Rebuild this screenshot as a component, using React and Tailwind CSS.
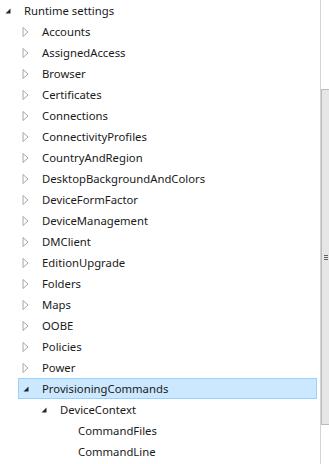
import React from 'react';

const rows = [
  { label: 'Runtime settings', level: 0, state: 'open' },
  { label: 'Accounts', level: 1, state: 'closed' },
  { label: 'AssignedAccess', level: 1, state: 'closed' },
  { label: 'Browser', level: 1, state: 'closed' },
  { label: 'Certificates', level: 1, state: 'closed' },
  { label: 'Connections', level: 1, state: 'closed' },
  { label: 'ConnectivityProfiles', level: 1, state: 'closed' },
  { label: 'CountryAndRegion', level: 1, state: 'closed' },
  { label: 'DesktopBackgroundAndColors', level: 1, state: 'closed' },
  { label: 'DeviceFormFactor', level: 1, state: 'closed' },
  { label: 'DeviceManagement', level: 1, state: 'closed' },
  { label: 'DMClient', level: 1, state: 'closed' },
  { label: 'EditionUpgrade', level: 1, state: 'closed' },
  { label: 'Folders', level: 1, state: 'closed' },
  { label: 'Maps', level: 1, state: 'closed' },
  { label: 'OOBE', level: 1, state: 'closed' },
  { label: 'Policies', level: 1, state: 'closed' },
  { label: 'Power', level: 1, state: 'closed' },
  { label: 'ProvisioningCommands', level: 1, state: 'open', selected: true },
  { label: 'DeviceContext', level: 2, state: 'open' },
  { label: 'CommandFiles', level: 3, state: 'leaf' },
  { label: 'CommandLine', level: 3, state: 'leaf' },
];

const indent = ['ml-0', 'ml-[18px]', 'ml-[36px]', 'ml-[54px]'];

function Arrow({ state }) {
  if (state === 'open') {
    return (
      <svg width="8" height="8" viewBox="0 0 8 8">
        <path d="M6.5 1.5 L6.5 6.5 L1.5 6.5 Z" fill="#262626" />
      </svg>
    );
  }
  if (state === 'closed') {
    return (
      <svg width="7" height="10" viewBox="0 0 7 10">
        <path d="M1 0.5 L6 5 L1 9.5 Z" fill="none" stroke="#a6a6a6" strokeWidth="1" />
      </svg>
    );
  }
  return null;
}

export default function App() {
  return (
    <div
      className="w-[329px] h-[464px] overflow-hidden flex bg-white text-[11.3px] text-[#1a1a1a]"
      style={{ fontFamily: '"Noto Sans", "Open Sans", sans-serif' }}
    >
      {/* arbre */}
      <div className="flex-1 flex flex-col pr-[3px]">
        {rows.map((r) => (
          <div
            key={r.label}
            className={`h-[21px] shrink-0 flex items-center border ${indent[r.level]} ${
              r.selected ? 'bg-[#cce8ff] border-[#99d1ff]' : 'border-transparent'
            }`}
          >
            <div className="w-[23px] shrink-0 flex items-center pl-[3px]">
              <Arrow state={r.state} />
            </div>
            <span className="leading-none whitespace-nowrap">{r.label}</span>
          </div>
        ))}
      </div>

      {/* barre de défilement */}
      <div className="w-[9px] shrink-0 border-l border-[#d4d4d4] pt-[89px]">
        <div className="h-[336px] bg-[#e6e6e6] border border-[#bcbcbc] border-r-0 flex flex-col items-center justify-center gap-[1px]">
          <div className="w-[4px] h-[1px] bg-[#606060]" />
          <div className="w-[4px] h-[1px] bg-[#606060]" />
          <div className="w-[4px] h-[1px] bg-[#606060]" />
        </div>
      </div>
    </div>
  );
}
